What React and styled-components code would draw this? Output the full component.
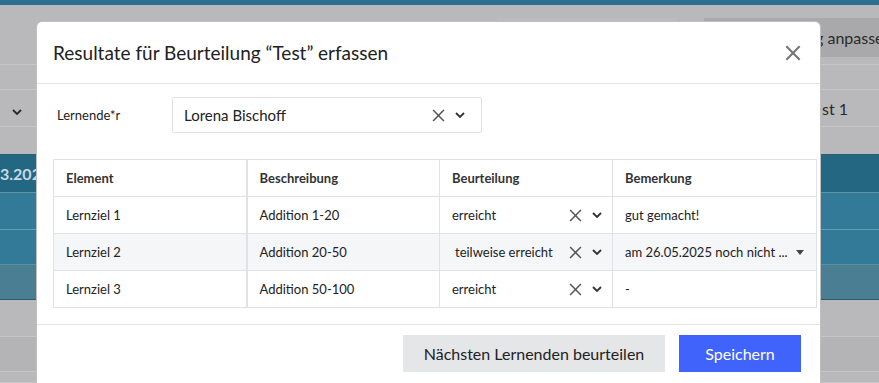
import React from 'react';
import styled, { createGlobalStyle, css } from 'styled-components';

const GlobalStyle = createGlobalStyle`
  html, body {
    margin: 0;
    padding: 0;
    overflow: hidden;
  }
  body {
    font-family: "Source Sans Pro", Lato, "Liberation Sans", sans-serif;
    color: #222;
  }
`;

const Page = styled.div`
  position: relative;
  width: 879px;
  height: 383px;
  overflow: hidden;
  background: #b9b9bb;
  display: flex;
  flex-direction: column;
`;

const TopStripe = styled.div`
  height: 5px;
  background: #2c6f8e;
`;

const Toolbar = styled.div`
  height: 60px;
  display: flex;
  align-items: flex-start;
  padding: 13px 0 0 497px;
  gap: 27px;
  box-sizing: border-box;
  border-bottom: 1px solid #c6c6c8;
`;

const ToolButton = styled.div`
  height: 39px;
  width: ${p => p.width}px;
  background: ${p => (p.dark ? '#a9a9ab' : '#bcbcbe')};
  box-sizing: border-box;
  padding-left: ${p => p.pad || 0}px;
  display: flex;
  align-items: center;
  font-size: 16px;
  color: #2a2a2a;
  white-space: nowrap;
  flex-shrink: 0;
`;

const BgRow = styled.div`
  height: ${p => p.h}px;
  flex-shrink: 0;
  display: flex;
  align-items: center;
  justify-content: space-between;
  box-sizing: border-box;
  background: ${p => p.bg || 'transparent'};
  border-bottom: 1px solid ${p => p.line || '#c6c6c8'};
  font-size: 16px;
  color: #2a2a2a;
`;

const BgCell = styled.div`
  padding-left: ${p => p.pl || 0}px;
  ${p => p.bold && css`
    font-weight: 700;
    color: #c9d9e1;
  `}
`;

const BgRight = styled.div`
  width: 57px;
  flex-shrink: 0;
`;

/* modal */

const Modal = styled.div`
  position: absolute;
  left: 36px;
  top: 21px;
  width: 785px;
  height: 380px;
  background: #fff;
  border: 1px solid rgba(0, 0, 0, 0.25);
  border-bottom: none;
  border-radius: 6px 6px 0 0;
  box-sizing: border-box;
  display: flex;
  flex-direction: column;
`;

const Header = styled.div`
  height: 62px;
  flex-shrink: 0;
  box-sizing: border-box;
  display: flex;
  align-items: center;
  justify-content: space-between;
  padding: 0 19px 0 16px;
  border-bottom: 1px solid #e3e5e8;
`;

const Title = styled.h2`
  margin: 0;
  font-size: 19px;
  font-weight: 400;
  color: #222;
`;

const CloseButton = styled.button`
  border: none;
  background: none;
  padding: 0;
  width: 16px;
  height: 16px;
  display: flex;
  cursor: pointer;
`;

const Body = styled.div`
  padding: 13px 3px 16px 16px;
  border-bottom: 1px solid #e3e5e8;
`;

const FieldRow = styled.div`
  display: flex;
  align-items: center;
  margin-bottom: 26px;
`;

const Label = styled.label`
  width: 115px;
  padding-left: 4px;
  font-size: 13px;
  color: #222;
`;

const Select = styled.div`
  width: 310px;
  height: 36px;
  box-sizing: border-box;
  border: 1px solid #dfe1e5;
  border-radius: 2px;
  display: flex;
  align-items: center;
  padding: 0 16px 0 11px;
  font-size: 15px;
`;

const SelectValue = styled.span`
  flex: 1;
`;

const Icons = styled.div`
  display: flex;
  align-items: center;
  gap: 10px;
`;

const Table = styled.table`
  width: 763px;
  border-collapse: collapse;
  table-layout: fixed;
  font-size: 13px;
  color: #222;
`;

const Th = styled.th`
  height: 36px;
  text-align: left;
  font-weight: 700;
  color: #333;
  padding: 0 12px;
  border: 1px solid #e0e2e6;
  ${p => p.thick && css`border-right-width: 2px;`}
`;

const Tr = styled.tr`
  background: ${p => (p.striped ? '#f5f6f8' : '#fff')};
`;

const Td = styled.td`
  height: 36px;
  padding: 0 ${p => p.pr || 12}px 0 ${p => p.pl || 12}px;
  border: 1px solid #e0e2e6;
  white-space: nowrap;
  ${p => p.thick && css`border-right-width: 2px;`}
`;

const CellSelect = styled.div`
  display: flex;
  align-items: center;
  justify-content: space-between;
`;

const Caret = styled.span`
  width: 0;
  height: 0;
  border-left: 4px solid transparent;
  border-right: 4px solid transparent;
  border-top: 5px solid #444;
`;

const Footer = styled.div`
  display: flex;
  justify-content: flex-end;
  gap: 14px;
  padding: 10px 19px 0 0;
`;

const Button = styled.button`
  height: 37px;
  width: 262px;
  border: none;
  border-radius: 0;
  font-family: inherit;
  font-size: 16px;
  padding: 0;
  cursor: pointer;
  background: #e5e6e8;
  color: #222;
  ${p => p.primary && css`
    background: #3f63fb;
    color: #fff;
    width: 122px;
  `}
`;

const XIcon = ({ size = 12, color = '#555', w = 1.6 }) => (
  <svg width={size} height={size} viewBox="0 0 12 12">
    <path d="M1 1 L11 11 M11 1 L1 11" stroke={color} strokeWidth={w} fill="none" />
  </svg>
);

const Chevron = ({ color = '#333' }) => (
  <svg width="10" height="6" viewBox="0 0 10 6">
    <path d="M1 1 L5 5 L9 1" stroke={color} strokeWidth="1.8" fill="none" />
  </svg>
);

const rows = [
  { el: 'Lernziel 1', desc: 'Addition 1-20', grade: 'erreicht', note: 'gut gemacht!' },
  { el: 'Lernziel 2', desc: 'Addition 20-50', grade: 'teilweise erreicht', note: 'am 26.05.2025 noch nicht ...', dropdown: true },
  { el: 'Lernziel 3', desc: 'Addition 50-100', grade: 'erreicht', note: '-' },
];

const App = () => (
  <Page>
    <GlobalStyle />
    <TopStripe />
    <Toolbar>
      <ToolButton width={180} />
      <ToolButton width={200} dark pad={38}>Beurteilung anpassen</ToolButton>
    </Toolbar>
    <BgRow h={25} />
    <BgRow h={37}>
      <BgCell pl={12}><Chevron color="#2a2a2a" /></BgCell>
      <BgRight>st 1</BgRight>
    </BgRow>
    <BgRow h={28} line="#2a5e74" />
    <BgRow h={38} bg="#246782" line="#5f93a8">
      <BgCell bold>3.2025</BgCell>
    </BgRow>
    <BgRow h={37} bg="#327a97" line="#6a9db1" />
    <BgRow h={35} bg="#327a97" line="#5d8fa3" />
    <BgRow h={35} bg="#4a7e93" line="#2f5a6b" />
    <BgRow h={37} />
    <BgRow h={35} bg="#b4b4b6" />
    <BgRow h={11} />

    <Modal>
      <Header>
        <Title>Resultate für Beurteilung “Test” erfassen</Title>
        <CloseButton aria-label="Schliessen">
          <XIcon size={16} color="#777" w={1.6} />
        </CloseButton>
      </Header>
      <Body>
        <FieldRow>
          <Label>Lernende*r</Label>
          <Select>
            <SelectValue>Lorena Bischoff</SelectValue>
            <Icons>
              <XIcon size={13} w={1.4} />
              <Chevron />
            </Icons>
          </Select>
        </FieldRow>
        <Table>
          <colgroup>
            <col style={{ width: 193 }} />
            <col style={{ width: 193 }} />
            <col style={{ width: 173 }} />
            <col style={{ width: 204 }} />
          </colgroup>
          <thead>
            <tr>
              <Th thick>Element</Th>
              <Th>Beschreibung</Th>
              <Th>Beurteilung</Th>
              <Th>Bemerkung</Th>
            </tr>
          </thead>
          <tbody>
            {rows.map((r, i) => (
              <Tr key={r.el} striped={i === 1}>
                <Td thick>{r.el}</Td>
                <Td>{r.desc}</Td>
                <Td pl={r.dropdown ? 15 : 12} pr={10}>
                  <CellSelect>
                    <span>{r.grade}</span>
                    <Icons>
                      <XIcon size={13} w={1.4} />
                      <Chevron />
                    </Icons>
                  </CellSelect>
                </Td>
                <Td>
                  <CellSelect>
                    <span>{r.note}</span>
                    {r.dropdown && <Caret />}
                  </CellSelect>
                </Td>
              </Tr>
            ))}
          </tbody>
        </Table>
      </Body>
      <Footer>
        <Button>Nächsten Lernenden beurteilen</Button>
        <Button primary>Speichern</Button>
      </Footer>
    </Modal>
  </Page>
);

export default App;
